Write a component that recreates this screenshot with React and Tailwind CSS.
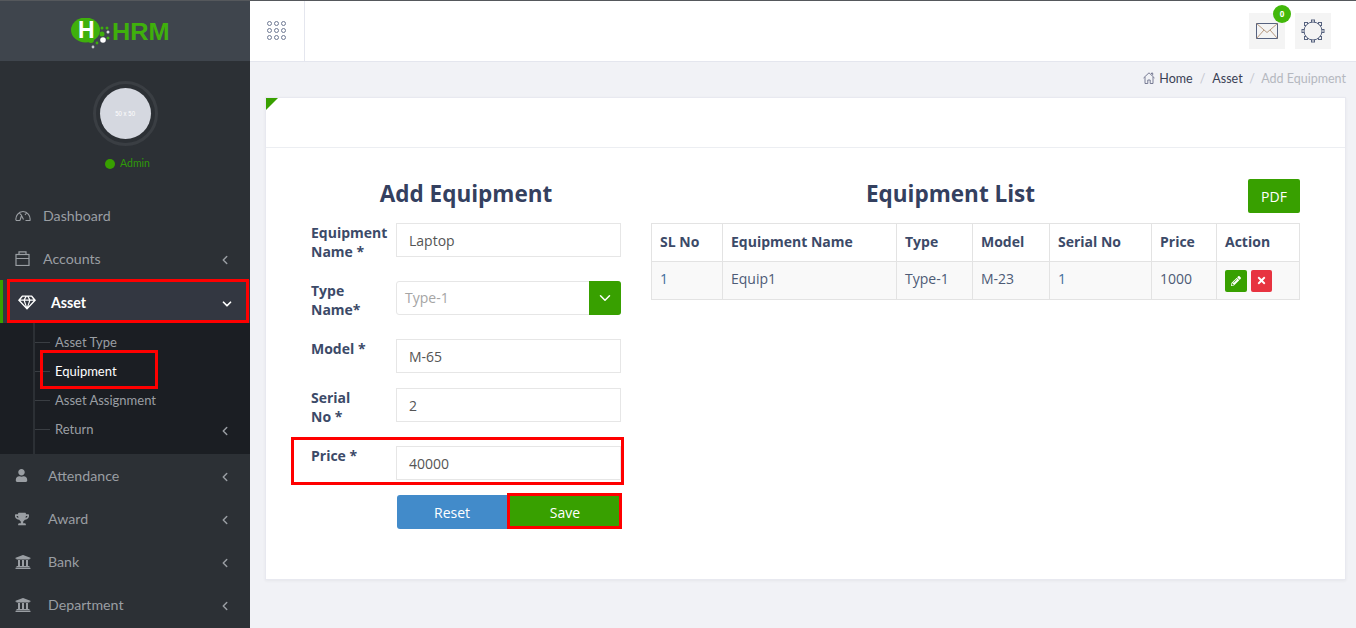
import React from 'react';
import { FaUser, FaTrophy, FaUniversity, FaPencilAlt, FaTimes } from 'react-icons/fa';
import { ChevronLeft, ChevronDown } from 'lucide-react';

const Logo = () => (
  <div className="relative w-[100px] h-[32px]">
    <svg className="absolute left-0 top-0" width="100" height="34" viewBox="0 0 100 34">
      <ellipse cx="14.500" cy="12" rx="14.500" ry="12.500" fill="#3fb00c" />
      <circle cx="20" cy="22" r="3" fill="#3fb00c" />
      <circle cx="31" cy="16" r="2.500" fill="#3fb00c" />
      <circle cx="31" cy="10" r="1.500" fill="#3fb00c" />
      <circle cx="36" cy="10" r="1.500" fill="#3fb00c" />
      <circle cx="37" cy="14" r="1.500" fill="#d9dde0" />
      <circle cx="32" cy="22" r="2.800" fill="#ffffff" />
      <circle cx="26" cy="25" r="1.400" fill="#3fb00c" />
      <circle cx="22" cy="29" r="1.400" fill="#c6cacd" />
      <circle cx="37" cy="20" r="1.500" fill="#3fb00c" />
    </svg>
    <span className="absolute left-[7px] top-[0px] text-[23px] leading-[24px] font-bold text-white font-['Liberation_Sans',sans-serif]">H</span>
    <span className="absolute left-[41px] top-[2px] text-[23px] leading-[24px] font-bold text-[#3fb00c] scale-x-[1.1] origin-left font-['Liberation_Sans',sans-serif]">HRM</span>
  </div>
);

const DashIcon = () => (
  <svg width="16" height="12" viewBox="0 0 16 12" fill="none" stroke="currentColor" strokeWidth="1.1">
    <path d="M1 10.500c-.8-4.500 2.500-9 7-9s7.800 4.500 7 9H10.500M1 10.500h4" />
    <path d="M5 10.500L6.500 5.500l2 4" />
    <path d="M4.500 3l1.500 2M11.500 3L10 5" />
  </svg>
);

const BagIcon = () => (
  <svg width="15" height="15" viewBox="0 0 15 15" fill="none" stroke="currentColor" strokeWidth="1.2">
    <rect x="1" y="3.500" width="13" height="11" />
    <path d="M1 7.500h13M4 3.500V.8h7v2.700" />
  </svg>
);

const GemIcon = () => (
  <svg width="18" height="15" viewBox="0 0 18 15" fill="#ffffff">
    <path fillRule="evenodd" d="M4 .5h10l4 4.800L9 14.800 0 5.300 4 .5zM4.800 1.700L2.600 4.500h3.100l1.500-2.800H4.800zm3.900 0L7.100 4.500h3.800L9.300 1.700H8.700zm2.100 0l1.500 2.800h3.100l-2.200-2.800h-2.400zM2.400 5.700l5.300 5.800-2.100-5.800H2.400zm4.500 0L9 11.900l2.100-6.200H6.900zm5.500 0l-2.100 5.800 5.300-5.800h-3.200z" />
  </svg>
);

const HomeIcon = () => (
  <svg width="12" height="12" viewBox="0 0 12 12" fill="none" stroke="#6b6f8a" strokeWidth="0.9" className="mr-[4px] mb-[2px]">
    <path d="M0.500 6L6 0.800 11.500 6M2 5v6.500h2.800V8h2.400v3.500H10V5M8.500 2V1h1.200v2.300" />
  </svg>
);

const MailIcon = () => (
  <svg width="22" height="16" viewBox="0 0 22 16" fill="none" stroke="#56627f" strokeWidth="1">
    <rect x="0.500" y="0.500" width="21" height="15" />
    <path d="M0.500 0.500L11 9.500 21.500 0.500M0.500 15.500l7.500-8.500M21.500 15.500L14 7" stroke="#b79a80" />
  </svg>
);

const GearIcon = () => (
  <svg width="24" height="24" viewBox="0 0 24 24" fill="#f4f4f4" stroke="#56627f" strokeWidth="1">
    <rect x="10.500" y="1" width="3" height="3" />
    <rect x="10.500" y="20" width="3" height="3" />
    <rect x="1" y="10.500" width="3" height="3" />
    <rect x="20" y="10.500" width="3" height="3" />
    <rect x="3.500" y="3.500" width="3" height="3" />
    <rect x="17.500" y="3.500" width="3" height="3" />
    <rect x="3.500" y="17.500" width="3" height="3" />
    <rect x="17.500" y="17.500" width="3" height="3" />
    <circle cx="12" cy="12" r="9" />
  </svg>
);

const GridIcon = () => (
  <div className="grid grid-cols-3 gap-x-[2px] gap-y-[2px]">
    {[0, 1, 2, 3, 4, 5, 6, 7, 8].map((i) => (
      <span key={i} className="w-[5px] h-[5px] rounded-full border border-[#6f7a94]" />
    ))}
  </div>
);

const menuTop = [
  { label: 'Dashboard', icon: <DashIcon /> },
  { label: 'Accounts', icon: <BagIcon />, arrow: true },
];

const menuBottom = [
  { label: 'Attendance', icon: <FaUser size={13} /> },
  { label: 'Award', icon: <FaTrophy size={14} /> },
  { label: 'Bank', icon: <FaUniversity size={16} /> },
  { label: 'Department', icon: <FaUniversity size={16} /> },
];

const subItems = ['Asset Type', 'Equipment', 'Asset Assignment', 'Return'];

const Sidebar = () => (
  <aside className="w-[250px] h-full shrink-0 bg-[#2c3035] font-['Lato',sans-serif] text-[14.200px] text-[#9a9ea3] overflow-hidden">
    <div className="h-[61px] bg-[#3f454d] border-t border-[#55585c] flex items-center pl-[71px] pt-[6px]">
      <Logo />
    </div>
    <div className="flex flex-col items-center h-[133px] pt-[20px]">
      <div className="w-[65px] h-[65px] rounded-full border-[3px] border-[#3a3e43] flex items-center justify-center">
        <div className="w-[51px] h-[51px] rounded-full bg-[#d5d8e0] flex items-center justify-center text-[8px] text-white font-['Liberation_Sans',sans-serif]">
          <span className="scale-x-75 whitespace-nowrap">50 x 50</span>
        </div>
      </div>
      <div className="flex items-center gap-[5px] mt-[10px] pl-[5px] text-[10.500px] text-[#2f9a08]">
        <span className="w-[10px] h-[10px] rounded-full bg-[#38a000]" />
        Admin
      </div>
    </div>
    {menuTop.map((m) => (
      <div key={m.label} className="h-[43px] flex items-center pl-[15px] pr-[18px]">
        <span className="w-[28px] flex">{m.icon}</span>
        <span>{m.label}</span>
        {m.arrow && <ChevronLeft size={14} strokeWidth={2.500} className="ml-auto mt-[3px]" />}
      </div>
    ))}
    <div className="relative h-[43px] flex items-center pl-[15px] pr-[16px] pt-[2px] bg-[#333741] border-l-[3px] border-[#38a000] text-white font-bold">
      <span className="w-[33px] flex"><GemIcon /></span>
      <span>Asset</span>
      <ChevronDown size={14} className="ml-auto mt-[2px]" strokeWidth={3} />
      <div className="absolute left-[4px] right-[1px] top-[-1px] bottom-0 border-[3px] border-[#ff0000]" />
    </div>
    <div className="relative h-[131px] bg-[#1b1e23] pt-[5px] text-[13px]">
      <div className="absolute left-[33px] top-0 bottom-0 w-[2px] bg-[#2c3035]" />
      {subItems.map((s) => (
        <div key={s} className="relative h-[29px] flex items-center pl-[55px] pr-[18px]">
          <span className="absolute left-[35px] w-[15px] h-[1px] bg-[#3a3e43]" />
          <span className={s === 'Equipment' ? 'text-white' : ''}>{s}</span>
          {s === 'Return' && <ChevronLeft size={14} strokeWidth={2.500} className="ml-auto mt-[3px]" />}
          {s === 'Equipment' && (
            <div className="absolute left-[40px] top-[-7px] w-[118px] h-[39px] border-[3px] border-[#ff0000]" />
          )}
        </div>
      ))}
    </div>
    {menuBottom.map((m) => (
      <div key={m.label} className="h-[43px] flex items-center pl-[15px] pr-[18px]">
        <span className="w-[33px] flex">{m.icon}</span>
        <span>{m.label}</span>
        <ChevronLeft size={14} strokeWidth={2.500} className="ml-auto mt-[3px]" />
      </div>
    ))}
  </aside>
);

const Field = ({ label, value, className = '' }) => (
  <div className={`flex ${className}`}>
    <label className="w-[85px] pr-[2px] text-[14px] leading-[19px] font-bold text-[#3c4a68]">{label}</label>
    <div className="w-[225px] h-[34px] border border-[#e6e6e6] bg-white pl-[12px] flex items-center text-[14px] text-[#555]">
      {value}
    </div>
  </div>
);

const EquipmentForm = () => (
  <div className="w-[310px]">
    <h2 className="h-[34px] mb-[11px] text-center text-[22.500px] leading-[32px] font-bold text-[#34405f]">Add Equipment</h2>
    <Field label="Equipment Name *" value="Laptop" />
    <div className="flex mt-[20px]">
      <label className="w-[85px] text-[14px] leading-[19px] font-bold text-[#3c4a68]">Type Name*</label>
      <div className="w-[225px] h-[34px] border border-[#e6e6e6] rounded-[3px] bg-white flex items-center text-[14px] text-[#a5a5a5] pl-[8px] pb-[1px] relative">
        Type-1
        <span className="absolute right-[-1px] top-[-1px] w-[32px] h-[34px] bg-[#38a000] rounded-r-[3px] flex items-center justify-center text-white">
          <ChevronDown size={18} />
        </span>
      </div>
    </div>
    <Field label="Model *" value="M-65" className="mt-[20px]" />
    <Field label={<>Serial<br />No *</>} value="2" className="mt-[15px]" />
    <div className="relative mt-[20px]">
      <Field label="Price *" value="40000" />
      <div className="absolute left-[-20px] right-[-3px] top-[-9px] bottom-[-5px] border-[3px] border-[#ff0000]" />
    </div>
    <div className="flex ml-[86px] mt-[15px] h-[34px] text-[14px] text-white">
      <div className="w-[110px] bg-[#428bca] rounded-l-[3px] flex items-center justify-center">Reset</div>
      <div className="relative w-[114px] pl-[2px] bg-[#38a000] flex items-center justify-center">
        Save
        <div className="absolute left-0 right-[-1px] top-[-2px] bottom-0 border-[3px] border-[#ff0000]" />
      </div>
    </div>
  </div>
);

const thCls = 'border border-[#e3e3e3] text-left font-bold px-[8px] pb-[2px] h-[38px]';
const tdCls = 'border border-[#e3e3e3] px-[8px] pb-[4px] h-[38px]';

const EquipmentTable = () => (
  <div className="w-[649px] ml-[30px]">
    <div className="relative h-[45px]">
      <h2 className="text-center text-[22.500px] leading-[32px] pr-[50px] font-bold text-[#34405f]">Equipment List</h2>
      <div className="absolute right-0 top-[1px] w-[52px] h-[34px] bg-[#38a000] rounded-[2px] flex items-center justify-center text-[14px] text-white">PDF</div>
    </div>
    <table className="w-[648px] table-fixed border-collapse text-[14px] text-[#3c4a68]">
      <colgroup>
        <col className="w-[71px]" />
        <col className="w-[174px]" />
        <col className="w-[76px]" />
        <col className="w-[77px]" />
        <col className="w-[102px]" />
        <col className="w-[65px]" />
        <col className="w-[83px]" />
      </colgroup>
      <thead>
        <tr>
          {['SL No', 'Equipment Name', 'Type', 'Model', 'Serial No', 'Price', 'Action'].map((h) => (
            <th key={h} className={thCls}>{h}</th>
          ))}
        </tr>
      </thead>
      <tbody>
        <tr className="bg-[#f9f9f9] text-[#4d5b76]">
          <td className={tdCls}><span className="text-[#3f6d9c]">1</span></td>
          <td className={tdCls}>Equip1</td>
          <td className={tdCls}>Type-1</td>
          <td className={tdCls}>M-23</td>
          <td className={tdCls}><span className="text-[#3f6d9c]">1</span></td>
          <td className={tdCls}>1000</td>
          <td className="border border-[#e3e3e3] px-[8px] h-[38px]">
            <div className="flex gap-[4px]">
              <span className="w-[22px] h-[22px] rounded-[2px] bg-[#38a000] flex items-center justify-center text-white"><FaPencilAlt size={10} /></span>
              <span className="w-[21px] h-[22px] rounded-[2px] bg-[#e73340] flex items-center justify-center text-white"><FaTimes size={11} /></span>
            </div>
          </td>
        </tr>
      </tbody>
    </table>
  </div>
);

export default function App() {
  return (
    <div className="flex w-[1356px] h-[628px] overflow-hidden font-['Open_Sans',sans-serif]">
      <Sidebar />
      <div className="flex-1 min-w-0 bg-[#f1f2f6] flex flex-col">
        <header className="h-[62px] shrink-0 bg-white border-t border-[#55585c] border-b-[#e4e6ee] flex items-stretch border-b">
          <div className="w-[55px] border-r border-[#e4e6ee] flex items-center justify-center pr-[1px] pb-[2px]">
            <GridIcon />
          </div>
          <div className="ml-auto flex items-start pt-[12px] pr-[25px] gap-[10px]">
            <div className="relative w-[36px] h-[36px] bg-[#f4f4f4] flex items-center justify-center">
              <MailIcon />
              <span className="absolute right-[-6px] top-[-8px] w-[18px] h-[18px] rounded-full bg-[#42b80a] text-white text-[8px] font-bold flex items-center justify-center">0</span>
            </div>
            <div className="w-[36px] h-[36px] bg-[#f4f4f4] flex items-center justify-center">
              <GearIcon />
            </div>
          </div>
        </header>
        <div className="h-[35px] shrink-0 flex items-center justify-end pr-[10px] pb-[1px] text-[12.500px] font-['Lato',sans-serif] text-[#3a3f55]">
          <HomeIcon />
          <span>Home</span>
          <span className="mx-[7px] text-[#c4c7d0]">/</span>
          <span>Asset</span>
          <span className="mx-[6.500px] text-[#c4c7d0]">/</span>
          <span className="text-[#b5b8c0]">Add Equipment</span>
        </div>
        <main className="relative w-[1081px] ml-[15px] h-[483px] bg-white border border-[#e8e9f0] shadow-[0_1px_3px_rgba(0,0,0,0.05)]">
          <div className="absolute left-0 top-0 w-0 h-0 border-t-[12px] border-r-[12px] border-t-[#38a000] border-r-transparent" />
          <div className="h-[50px] border-b border-[#eceef2]" />
          <div className="flex pl-[45px] pt-[30px]">
            <EquipmentForm />
            <EquipmentTable />
          </div>
        </main>
      </div>
    </div>
  );
}
